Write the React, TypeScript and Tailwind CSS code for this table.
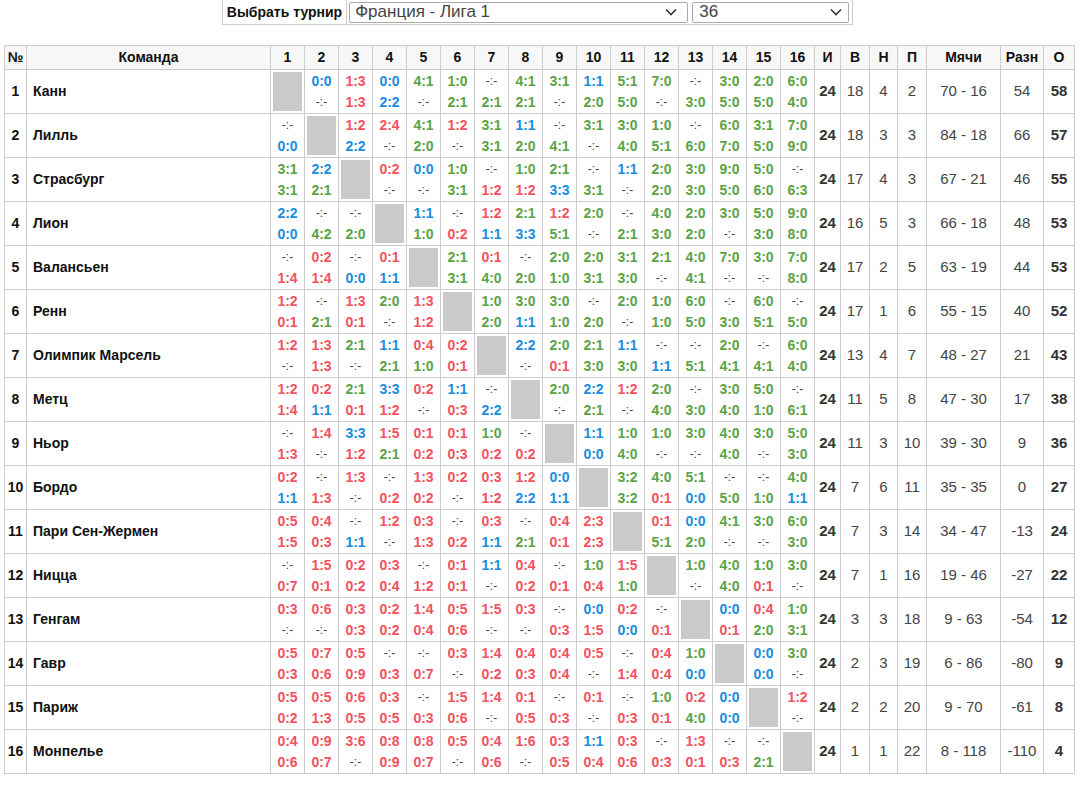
import React from 'react';

const teams = [
  { name: 'Канн', st: [24, 18, 4, 2, '70 - 16', 54, 58], r: 'X 0:0/- 1:3/1:3 0:0/2:2 4:1/- 1:0/2:1 -/2:1 4:1/2:1 3:1/- 1:1/2:0 5:1/5:0 7:0/- -/3:0 3:0/5:0 2:0/5:0 6:0/4:0' },
  { name: 'Лилль', st: [24, 18, 3, 3, '84 - 18', 66, 57], r: '-/0:0 X 1:2/2:2 2:4/- 4:1/2:0 1:2/- 3:1/3:1 1:1/2:0 -/4:1 3:1/- 3:0/4:0 1:0/5:1 -/6:0 6:0/7:0 3:1/5:0 7:0/9:0' },
  { name: 'Страсбург', st: [24, 17, 4, 3, '67 - 21', 46, 55], r: '3:1/3:1 2:2/2:1 X 0:2/- 0:0/- 1:0/3:1 -/1:2 1:0/1:2 2:1/3:3 -/3:1 1:1/- 2:0/2:0 3:0/3:0 9:0/5:0 5:0/6:0 -/6:3' },
  { name: 'Лион', st: [24, 16, 5, 3, '66 - 18', 48, 53], r: '2:2/0:0 -/4:2 -/2:0 X 1:1/1:0 -/0:2 1:2/1:1 2:1/3:3 1:2/5:1 2:0/- -/2:1 4:0/3:0 2:0/2:0 3:0/- 5:0/3:0 9:0/8:0' },
  { name: 'Валансьен', st: [24, 17, 2, 5, '63 - 19', 44, 53], r: '-/1:4 0:2/1:4 -/0:0 0:1/1:1 X 2:1/3:1 0:1/4:0 -/2:0 2:0/1:0 2:0/3:1 3:1/3:0 2:1/- 4:0/4:1 7:0/- 3:0/- 7:0/8:0' },
  { name: 'Ренн', st: [24, 17, 1, 6, '55 - 15', 40, 52], r: '1:2/0:1 -/2:1 1:3/0:1 2:0/- 1:3/1:2 X 1:0/2:0 3:0/1:1 3:0/1:0 -/2:0 2:0/- 1:0/1:0 6:0/5:0 -/3:0 6:0/5:1 -/5:0' },
  { name: 'Олимпик Марсель', st: [24, 13, 4, 7, '48 - 27', 21, 43], r: '1:2/- 1:3/1:3 2:1/- 1:1/2:1 0:4/1:0 0:2/0:1 X 2:2/- 2:0/0:1 2:1/3:0 1:1/3:0 -/1:1 -/5:1 2:0/4:1 -/4:1 6:0/4:0' },
  { name: 'Метц', st: [24, 11, 5, 8, '47 - 30', 17, 38], r: '1:2/1:4 0:2/1:1 2:1/0:1 3:3/1:2 0:2/- 1:1/0:3 -/2:2 X 2:0/- 2:2/2:1 1:2/- 2:0/4:0 -/3:0 3:0/4:0 5:0/1:0 -/6:1' },
  { name: 'Ньор', st: [24, 11, 3, 10, '39 - 30', 9, 36], r: '-/1:3 1:4/- 3:3/1:2 1:5/2:1 0:1/0:2 0:1/0:3 1:0/0:2 -/0:2 X 1:1/0:0 1:0/4:0 1:0/- 3:0/- 4:0/4:0 3:0/- 5:0/3:0' },
  { name: 'Бордо', st: [24, 7, 6, 11, '35 - 35', 0, 27], r: '0:2/1:1 -/1:3 1:3/- -/0:2 1:3/0:2 0:2/- 0:3/1:2 1:2/2:2 0:0/1:1 X 3:2/3:2 4:0/0:1 5:1/0:0 -/5:0 -/1:0 4:0/1:1' },
  { name: 'Пари Сен-Жермен', st: [24, 7, 3, 14, '34 - 47', -13, 24], r: '0:5/1:5 0:4/0:3 -/1:1 1:2/- 0:3/1:3 -/0:2 0:3/1:1 -/2:1 0:4/0:1 2:3/2:3 X 0:1/5:1 0:0/2:0 4:1/- 3:0/- 6:0/3:0' },
  { name: 'Ницца', st: [24, 7, 1, 16, '19 - 46', -27, 22], r: '-/0:7 1:5/0:1 0:2/0:2 0:3/0:4 -/1:2 0:1/0:1 1:1/- 0:4/0:2 -/0:1 1:0/0:4 1:5/1:0 X 1:0/- 4:0/4:0 1:0/0:1 3:0/-' },
  { name: 'Генгам', st: [24, 3, 3, 18, '9 - 63', -54, 12], r: '0:3/- 0:6/- 0:3/0:3 0:2/0:2 1:4/0:4 0:5/0:6 1:5/- 0:3/- -/0:3 0:0/1:5 0:2/0:0 -/0:1 X 0:0/0:1 0:4/2:0 1:0/3:1' },
  { name: 'Гавр', st: [24, 2, 3, 19, '6 - 86', -80, 9], r: '0:5/0:3 0:7/0:6 0:5/0:9 -/0:3 -/0:7 0:3/- 1:4/0:2 0:4/0:3 0:4/0:4 0:5/- -/1:4 0:4/0:4 1:0/0:0 X 0:0/0:0 3:0/-' },
  { name: 'Париж', st: [24, 2, 2, 20, '9 - 70', -61, 8], r: '0:5/0:2 0:5/1:3 0:6/0:5 0:3/0:5 -/0:3 1:5/0:6 1:4/- 0:1/0:5 -/0:3 0:1/- -/0:3 1:0/0:1 0:2/4:0 0:0/0:0 X 1:2/-' },
  { name: 'Монпелье', st: [24, 1, 1, 22, '8 - 118', -110, 4], r: '0:4/0:6 0:9/0:7 3:6/- 0:8/0:9 0:8/0:7 0:5/- 0:4/0:6 1:6/- 0:3/0:5 1:1/0:4 0:3/0:6 -/0:3 1:3/0:1 -/0:3 -/2:1 X' },
];

const Score = ({ s }: { s: string }) => {
  if (s === '-') {
    return <div className="h-[21px] leading-[21px] text-[12px] text-[#444]">-:-</div>;
  }
  const [a, b] = s.split(':').map(Number);
  const color = a > b ? 'text-[#5ba346]' : a < b ? 'text-[#f5515f]' : 'text-[#1a8ce0]';
  return <div className={`h-[21px] leading-[21px] text-[14px] font-bold ${color}`}>{s}</div>;
};

const Chevron = () => (
  <svg width="12" height="8" viewBox="0 0 12 8" className="shrink-0">
    <path d="M1 1.5 L6 6.5 L11 1.5" fill="none" stroke="#333" strokeWidth="1.6" />
  </svg>
);

export default function App() {
  const cols = Array.from({ length: 16 }, (_, i) => i + 1);
  const td = 'border border-[#cccccc]';

  return (
    <div className="w-[1091px] min-h-[785px] bg-white text-[#222]" style={{ fontFamily: '"Liberation Sans", Arial, sans-serif' }}>
      {/* tournament picker */}
      <div className="w-[1075px] flex justify-center">
        <div className="flex items-center h-[25px] border border-t-0 border-[#cccccc]">
          <div className="h-full flex items-center px-[4px] border-r border-[#cccccc] text-[14px] font-bold text-[#111]">
            Выбрать турнир
          </div>
          <div className="ml-[2px] w-[339px] h-[21px] flex items-center justify-between border border-[#aaaaaa] rounded-[2px] pl-[5px] pr-[10px] text-[17px] text-[#444]">
            <span>Франция - Лига 1</span>
            <Chevron />
          </div>
          <div className="ml-[4px] mr-[3px] w-[157px] h-[21px] flex items-center justify-between border border-[#aaaaaa] rounded-[2px] pl-[6px] pr-[6px] text-[17px] text-[#444]">
            <span>36</span>
            <Chevron />
          </div>
        </div>
      </div>

      <table className="table-fixed border-collapse ml-[4px] mt-[20px] w-[1070px]">
        <colgroup>
          <col className="w-[22px]" />
          <col className="w-[244px]" />
          {cols.map((c) => (
            <col key={c} className="w-[34px]" />
          ))}
          <col className="w-[26px]" />
          <col className="w-[29px]" />
          <col className="w-[28px]" />
          <col className="w-[29px]" />
          <col className="w-[74px]" />
          <col className="w-[43px]" />
          <col className="w-[31px]" />
        </colgroup>
        <thead>
          <tr className="h-[24px] bg-[#f7f7f7] text-[14px] font-bold text-[#111]">
            <th className={td}>№</th>
            <th className={td}>Команда</th>
            {cols.map((c) => (
              <th key={c} className={td}>{c}</th>
            ))}
            <th className={td}>И</th>
            <th className={td}>В</th>
            <th className={td}>Н</th>
            <th className={td}>П</th>
            <th className={td}>Мячи</th>
            <th className={td}>Разн</th>
            <th className={td}>О</th>
          </tr>
        </thead>
        <tbody>
          {teams.map((t, i) => (
            <tr key={t.name} className="h-[43px]">
              <td className={`${td} text-center text-[14px] font-bold text-[#111]`}>{i + 1}</td>
              <td className={`${td} pl-[6px] text-[14px] font-bold text-[#111]`}>{t.name}</td>
              {t.r.split(' ').map((cell, j) =>
                cell === 'X' ? (
                  <td key={j} className={`${td} p-[2px]`}>
                    <div className="h-[39px] bg-[#cacaca]" />
                  </td>
                ) : (
                  <td key={j} className={`${td} p-0 text-center`}>
                    {cell.split('/').map((s, k) => (
                      <Score key={k} s={s} />
                    ))}
                  </td>
                )
              )}
              <td className={`${td} text-center text-[15px] font-bold text-[#333]`}>{t.st[0]}</td>
              <td className={`${td} text-center text-[15px] text-[#444]`}>{t.st[1]}</td>
              <td className={`${td} text-center text-[15px] text-[#444]`}>{t.st[2]}</td>
              <td className={`${td} text-center text-[15px] text-[#444]`}>{t.st[3]}</td>
              <td className={`${td} text-center text-[15px] text-[#444]`}>{t.st[4]}</td>
              <td className={`${td} text-center text-[15px] text-[#444]`}>{t.st[5]}</td>
              <td className={`${td} text-center text-[15px] font-bold text-[#333]`}>{t.st[6]}</td>
            </tr>
          ))}
        </tbody>
      </table>
    </div>
  );
}
